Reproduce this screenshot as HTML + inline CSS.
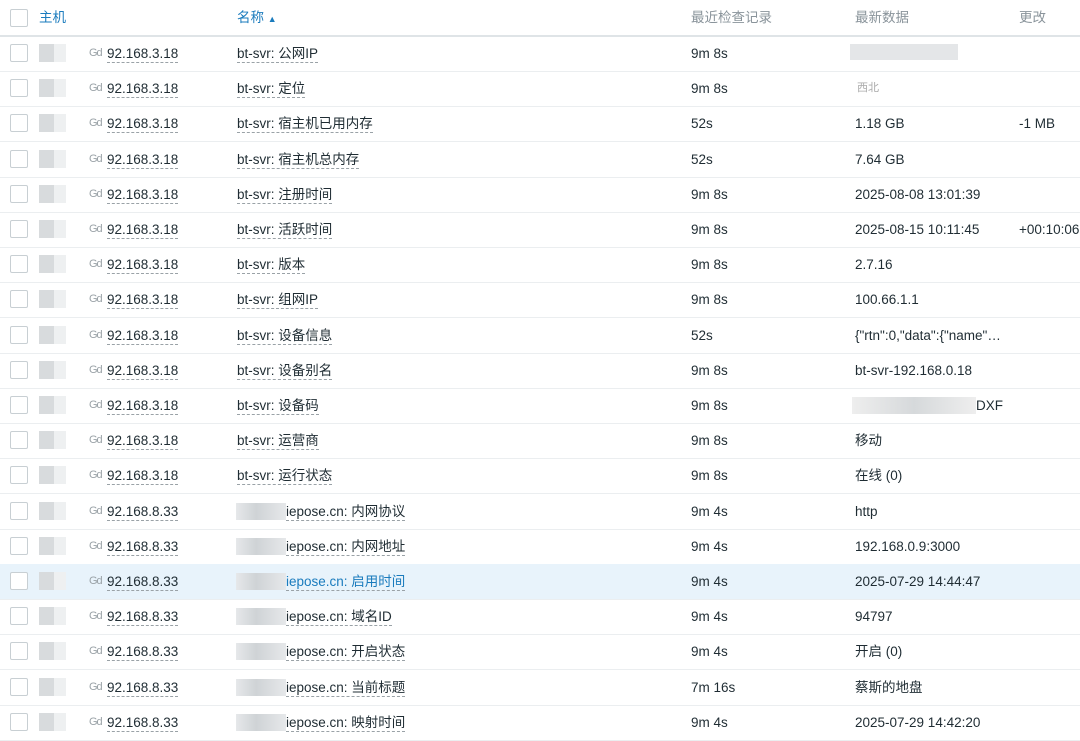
<!DOCTYPE html>
<html><head><meta charset="utf-8"><style>
body{margin:0;width:1080px;height:741px;overflow:hidden;background:#fff;font-family:"Liberation Sans","Noto Sans CJK SC",sans-serif;font-size:13.5px;color:#1f2c33;position:relative}
.hdr{position:absolute;left:0;top:0;width:1080px;height:35px;border-bottom:2px solid #dfe4e7;background:#fff}
.hdr span{position:absolute;top:9px;line-height:17px;color:#8a949b}
.row{position:absolute;left:0;width:1080px;height:35px;border-bottom:1px solid #ebeef0}
.row span{position:absolute;top:9px;line-height:17px;height:17px;white-space:nowrap}
.cb{position:absolute;left:10px;top:8px;width:16px;height:16px;border:1px solid #c8cfd3;border-radius:2px;background:#fff}
.bx{position:absolute;left:39px;top:8px;width:15px;height:18px;background:#d8dbdd}
.bx2{position:absolute;left:54px;top:8px;width:12px;height:18px;background:#eef0f1}
.row span.ic{left:89px;font-size:11px;color:#9aa2a7;letter-spacing:-1px}
.u{border-bottom:1px dashed #9aa2a7}
.bl{position:absolute;left:236px;top:9px;width:50px;height:17px;background:linear-gradient(90deg,#e6e8ea,#cfd3d6 40%,#e6e8ea)}
.hl{background:#e8f3fb}
</style></head><body>
<div class="hdr"><div class="cb" style="top:9px"></div>
<span style="left:39px;color:#1a7bbd">主机</span>
<span style="left:237px;color:#1a7bbd">名称 <small style="font-size:9px">▲</small></span>
<span style="left:691px">最近检查记录</span>
<span style="left:855px">最新数据</span>
<span style="left:1019px">更改</span></div>
<div id="rows"></div>
<script>
var d=[["3.18","bt-svr: 公网IP","9m 8s","",""],["3.18","bt-svr: 定位","9m 8s","",""],["3.18","bt-svr: 宿主机已用内存","52s","1.18 GB","-1 MB"],["3.18","bt-svr: 宿主机总内存","52s","7.64 GB",""],["3.18","bt-svr: 注册时间","9m 8s","2025-08-08 13:01:39",""],["3.18","bt-svr: 活跃时间","9m 8s","2025-08-15 10:11:45","+00:10:06"],["3.18","bt-svr: 版本","9m 8s","2.7.16",""],["3.18","bt-svr: 组网IP","9m 8s","100.66.1.1",""],["3.18","bt-svr: 设备信息","52s","{\"rtn\":0,\"data\":{\"name\"…",""],["3.18","bt-svr: 设备别名","9m 8s","bt-svr-192.168.0.18",""],["3.18","bt-svr: 设备码","9m 8s","",""],["3.18","bt-svr: 运营商","9m 8s","移动",""],["3.18","bt-svr: 运行状态","9m 8s","在线 (0)",""],["8.33","iepose.cn: 内网协议","9m 4s","http",""],["8.33","iepose.cn: 内网地址","9m 4s","192.168.0.9:3000",""],["8.33","iepose.cn: 启用时间","9m 4s","2025-07-29 14:44:47",""],["8.33","iepose.cn: 域名ID","9m 4s","94797",""],["8.33","iepose.cn: 开启状态","9m 4s","开启 (0)",""],["8.33","iepose.cn: 当前标题","7m 16s","蔡斯的地盘",""],["8.33","iepose.cn: 映射时间","9m 4s","2025-07-29 14:42:20",""]];
var h="";d.forEach(function(r,i){var t=36+i*35.2;var b=r[1].indexOf("iepose")==0;var hl=i==15;
h+='<div class="row'+(hl?' hl':'')+'" style="top:'+t+'px"><div class="cb"></div><div class="bx"></div><div class="bx2"></div><span class="ic">Gd</span><span style="left:107px" class="u">92.168.'+r[0]+'</span>'+(b?'<div class="bl"></div>':'')+'<span class="u" style="left:'+(b?286:237)+'px;'+(hl?'color:#1a7bbd':'')+'">'+r[1]+'</span><span style="left:691px">'+r[2]+'</span><span style="left:855px">'+r[3]+'</span><span style="left:1019px">'+r[4]+'</span>'+
(i==0?'<div style="position:absolute;left:850px;top:8px;width:108px;height:16px;background:#e4e6e8"></div>':'')+
(i==1?'<span style="left:857px;color:#aaa;font-size:11px">西北</span>':'')+
(i==10?'<div style="position:absolute;left:852px;top:9px;width:124px;height:17px;background:linear-gradient(90deg,#eee,#d6d9db,#eee)"></div><span style="left:976px">DXF</span>':'')+'</div>';});
document.getElementById("rows").innerHTML=h;
</script>
</body></html>
